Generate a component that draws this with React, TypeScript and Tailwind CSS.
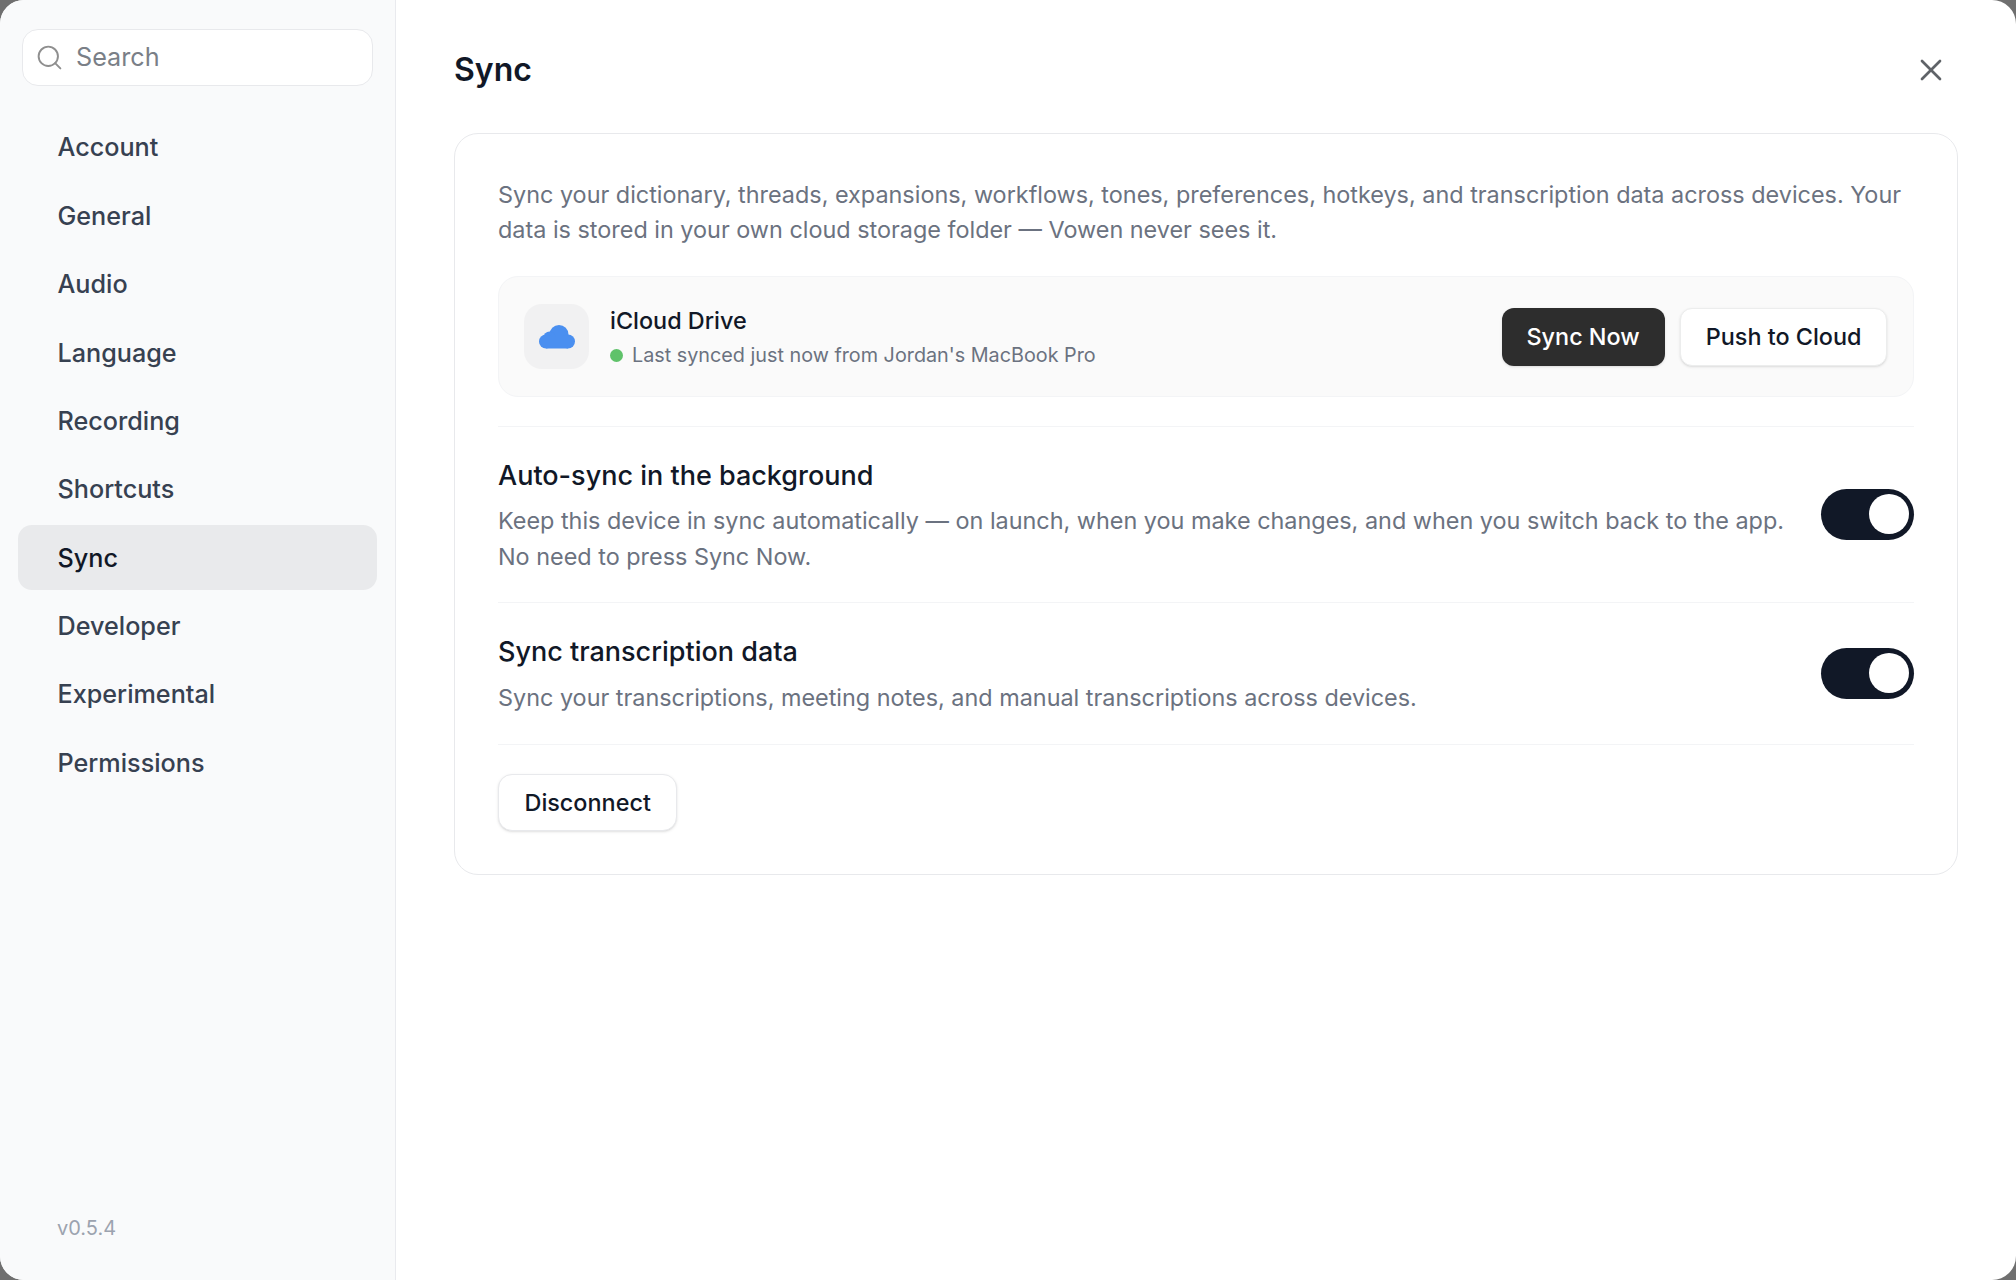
import React from "react";
import { Search, X } from "lucide-react";

const navItems = ["Account", "General", "Audio", "Language", "Recording", "Shortcuts", "Sync", "Developer", "Experimental", "Permissions"];

function Toggle() {
  return (
    <div className="mb-[2px] flex h-[51px] w-[93px] shrink-0 items-center justify-end rounded-full bg-[#111827] pr-[5px]">
      <div className="h-[40px] w-[40px] rounded-full bg-white"></div>
    </div>
  );
}

function CloudIcon() {
  return (
    <svg width="36" height="24" viewBox="0 0 36 24" fill="#4a8ff0" className="mt-[1px]">
      <circle cx="20" cy="9.5" r="9.5" />
      <circle cx="10.5" cy="12.5" r="6" />
      <circle cx="7" cy="16.5" r="7" />
      <circle cx="29" cy="16.5" r="7" />
      <rect x="7" y="12" width="22" height="11.5" />
    </svg>
  );
}

export default function App() {
  return (
    <div className="h-[1280px] w-[2016px] bg-[#6f6f6f] font-['Inter',sans-serif]">
      <div className="flex h-full w-full overflow-hidden rounded-[24px] bg-white">
        <aside className="flex w-[396px] shrink-0 flex-col border-r border-[#e9eaee] bg-[#f9fafb] pt-[29px] pb-[37px]">
          <div className="mx-[22px] flex h-[57px] items-center gap-[12px] rounded-[16px] border border-[#e8e9ec] bg-white pl-[12px]">
            <Search size={29} strokeWidth={1.6} className="text-[#8f8f8f]" />
            <span className="text-[25.2px] text-[#7a7f87]">Search</span>
          </div>
          <nav className="mt-[28.5px] flex flex-col gap-[3.4px] px-[18px]">
            {navItems.map((item) => (
              <div
                key={item}
                className={`flex h-[65px] items-center rounded-[14px] pt-[2.5px] pl-[39.5px] text-[25.2px] font-medium ${item === "Sync" ? "bg-[#e9eaec] text-[#111827]" : "text-[#374151]"}`}
              >
                {item}
              </div>
            ))}
          </nav>
          <div className="mt-auto pl-[57px] text-[20px] text-[#9ca3af]">v0.5.4</div>
        </aside>

        <main className="flex min-w-0 flex-1 flex-col pl-[58px] pr-[58px]">
          <header className="flex h-[133px] shrink-0 items-center justify-between pt-[7px]">
            <h1 className="text-[32px] font-semibold text-[#111827]">Sync</h1>
            <X size={36} strokeWidth={1.8} className="mr-[9px] text-[#5f6368]" />
          </header>

          <section className="rounded-[24px] border border-[#e8e9ec] px-[43px] pt-[43px] pb-[43px]">
            <p className="text-[23.4px] leading-[35.4px] text-[#6b7280]">
              Sync your dictionary, threads, expansions, workflows, tones, preferences, hotkeys, and transcription data across devices. Your data is stored in your own cloud storage folder — Vowen never sees it.
            </p>

            <div className="mt-[28px] flex h-[121px] items-center justify-between rounded-[20px] border border-[#f3f4f6] bg-[#fafafa] pr-[26px] pl-[25px]">
              <div className="flex items-center gap-[21px]">
                <div className="flex h-[65px] w-[65px] items-center justify-center rounded-[18px] bg-[#f1f1f2]">
                  <CloudIcon />
                </div>
                <div className="flex flex-col gap-[2px] pt-[1px]">
                  <div className="text-[23.4px] leading-[35px] font-medium text-[#111827]">iCloud Drive</div>
                  <div className="flex items-center gap-[9px] text-[19.8px] leading-[31px] text-[#6b7280]">
                    <span className="h-[13px] w-[13px] rounded-full bg-[#5fc26a]"></span>
                    Last synced just now from Jordan's MacBook Pro
                  </div>
                </div>
              </div>
              <div className="flex items-center gap-[15.5px] pt-[1px]">
                <button className="h-[58px] rounded-[12px] bg-[#2d2d2d] px-[25px] text-[23.4px] font-medium text-white shadow-sm">Sync Now</button>
                <button className="h-[58px] rounded-[12px] border border-[#eceded] bg-white px-[24.5px] text-[23.4px] font-medium text-[#111827] shadow-sm">Push to Cloud</button>
              </div>
            </div>

            <div className="mt-[29px] flex items-center justify-between gap-[36px] border-t border-[#f3f4f6] pt-[30px] pb-[28px]">
              <div>
                <div className="text-[27px] leading-[38px] font-medium text-[#111827]">Auto-sync in the background</div>
                <p className="mt-[8.5px] text-[23.4px] leading-[35.4px] text-[#6b7280]">
                  Keep this device in sync automatically — on launch, when you make changes, and when you switch back to the app. No need to press Sync Now.
                </p>
              </div>
              <Toggle />
            </div>

            <div className="flex items-center justify-between gap-[36px] border-t border-[#f3f4f6] pt-[30px] pb-[29px]">
              <div>
                <div className="text-[27px] leading-[38px] font-medium text-[#111827]">Sync transcription data</div>
                <p className="mt-[8.5px] text-[23.4px] leading-[35.4px] text-[#6b7280]">
                  Sync your transcriptions, meeting notes, and manual transcriptions across devices.
                </p>
              </div>
              <Toggle />
            </div>

            <div className="border-t border-[#f3f4f6] pt-[29px]">
              <button className="h-[57px] rounded-[14px] border border-[#e8e9ec] bg-white px-[25.5px] text-[23.4px] font-medium text-[#111827] shadow-sm">Disconnect</button>
            </div>
          </section>
        </main>
      </div>
    </div>
  );
}
